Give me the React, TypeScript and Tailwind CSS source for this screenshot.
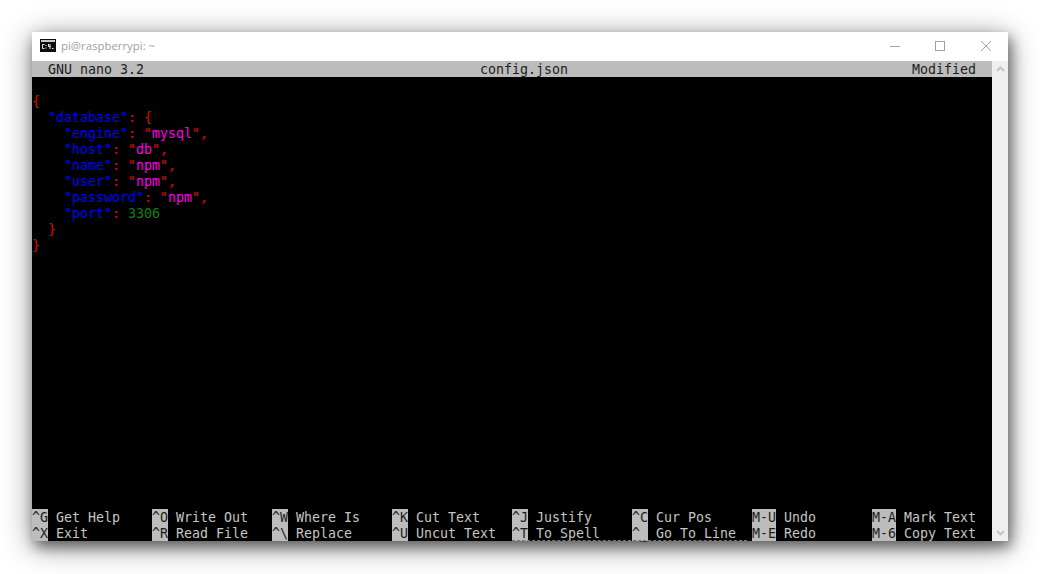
const mono = "font-['DejaVu_Sans_Mono',monospace]";

type Seg = [string, string];

const R = "text-[#f00000]";
const B = "text-[#0000ff]";
const M = "text-[#ff00e0]";
const G = "text-[#0f800f]";

const lines: Seg[][] = [
  [],
  [["{", R]],
  [["  ", R], ['"database"', B], [": {", R]],
  [["    ", R], ['"engine"', B], [": ", R], ['"', R], ["mysql", M], ['"', R], [",", R]],
  [["    ", R], ['"host"', B], [": ", R], ['"', R], ["db", M], ['"', R], [",", R]],
  [["    ", R], ['"name"', B], [": ", R], ['"', R], ["npm", M], ['"', R], [",", R]],
  [["    ", R], ['"user"', B], [": ", R], ['"', R], ["npm", M], ['"', R], [",", R]],
  [["    ", R], ['"password"', B], [": ", R], ['"', R], ["npm", M], ['"', R], [",", R]],
  [["    ", R], ['"port"', B], [": ", R], ["3306", G]],
  [["  }", R]],
  [["}", R]],
];

const shortcuts: [string, string, string, string][] = [
  ["^G", "Get Help", "^X", "Exit"],
  ["^O", "Write Out", "^R", "Read File"],
  ["^W", "Where Is", "^\\", "Replace"],
  ["^K", "Cut Text", "^U", "Uncut Text"],
  ["^J", "Justify", "^T", "To Spell"],
  ["^C", "Cur Pos", "^_", "Go To Line"],
  ["M-U", "Undo", "M-E", "Redo"],
  ["M-A", "Mark Text", "M-6", "Copy Text"],
];

function Row({ k, label }: { k: string; label: string }) {
  return (
    <div className="flex h-4 w-[120px] whitespace-pre">
      <span className="h-4 bg-[#bcbcbc] text-[#1c1c1c]">{k}</span>
      <span className="ml-2 h-4 text-[#c4c4c4]">{label}</span>
    </div>
  );
}

export default function App() {
  return (
    <div className="h-[574px] w-[1040px] overflow-hidden bg-white pt-8 pl-8">
      <div className="flex h-[509px] w-[976px] flex-col bg-white shadow-[3px_6px_12px_rgba(0,0,0,0.45),0_5px_28px_rgba(0,0,0,0.45)]">
        <div className="flex h-[29px] shrink-0 items-center pb-[2px] pl-2">
          <svg width="16" height="13" viewBox="0 0 16 13" className="shrink-0">
            <rect x="0" y="0" width="16" height="13" fill="#0c0c0c" />
            <rect x="1" y="1" width="14" height="2" fill="#c8c8c8" />
            <path d="M4.5 5.5H2.5V9.5H4.5M6 6V7M6 8.5V9.5M8.5 5V7.5H10.5M10 5V10M12 9.5H13.5" stroke="#e8e8e8" strokeWidth="1" fill="none" />
          </svg>
          <span className="ml-[5px] font-['Open_Sans',sans-serif] text-[11.4px] text-[#a0a0a0]">pi@raspberrypi: ~</span>
          <div className="ml-auto flex items-center pr-[17px]">
            <svg width="10" height="10" viewBox="0 0 10 10" className="mr-[35px]"><path d="M0 5.5H10" stroke="#a3a3a3" /></svg>
            <svg width="10" height="10" viewBox="0 0 10 10" className="mr-[36px]"><rect x="0.5" y="0.5" width="9" height="9" fill="none" stroke="#a3a3a3" /></svg>
            <svg width="10" height="10" viewBox="0 0 10 10"><path d="M0 0L10 10M10 0L0 10" stroke="#a3a3a3" /></svg>
          </div>
        </div>
        <div className="flex min-h-0 flex-1">
          <div className={`${mono} flex w-[960px] flex-col bg-black text-[13.29px] leading-[18px]`}>
            <div className="flex h-4 shrink-0 whitespace-pre bg-[#bcbcbc] pr-4 pl-4 text-[#1c1c1c]">
              <span className="w-[432px]">GNU nano 3.2</span>
              <span>config.json</span>
              <span className="ml-auto">Modified</span>
            </div>
            <div className="flex-1">
              {lines.map((l, i) => (
                <div key={i} className="h-4 whitespace-pre">
                  {l.map(([t, c], j) => (
                    <span key={j} className={c}>{t}</span>
                  ))}
                </div>
              ))}
            </div>
            <div className="relative flex shrink-0">
              {shortcuts.map(([a, b, c, d]) => (
                <div key={a} className="w-[120px]">
                  <Row k={a} label={b} />
                  <Row k={c} label={d} />
                </div>
              ))}
              <div className="absolute bottom-0 left-[480px] w-[235px] border-b border-dashed border-[#777777]" />
            </div>
          </div>
          <div className="flex w-4 flex-col items-center justify-between bg-[#efefef] py-[5px]">
            <svg width="9" height="6" viewBox="0 0 9 6"><path d="M1 5L4.5 1.5L8 5" stroke="#c4c4c4" strokeWidth="2" fill="none" /></svg>
            <svg width="9" height="6" viewBox="0 0 9 6"><path d="M1 1L4.5 4.5L8 1" stroke="#c4c4c4" strokeWidth="2" fill="none" /></svg>
          </div>
        </div>
      </div>
    </div>
  );
}
